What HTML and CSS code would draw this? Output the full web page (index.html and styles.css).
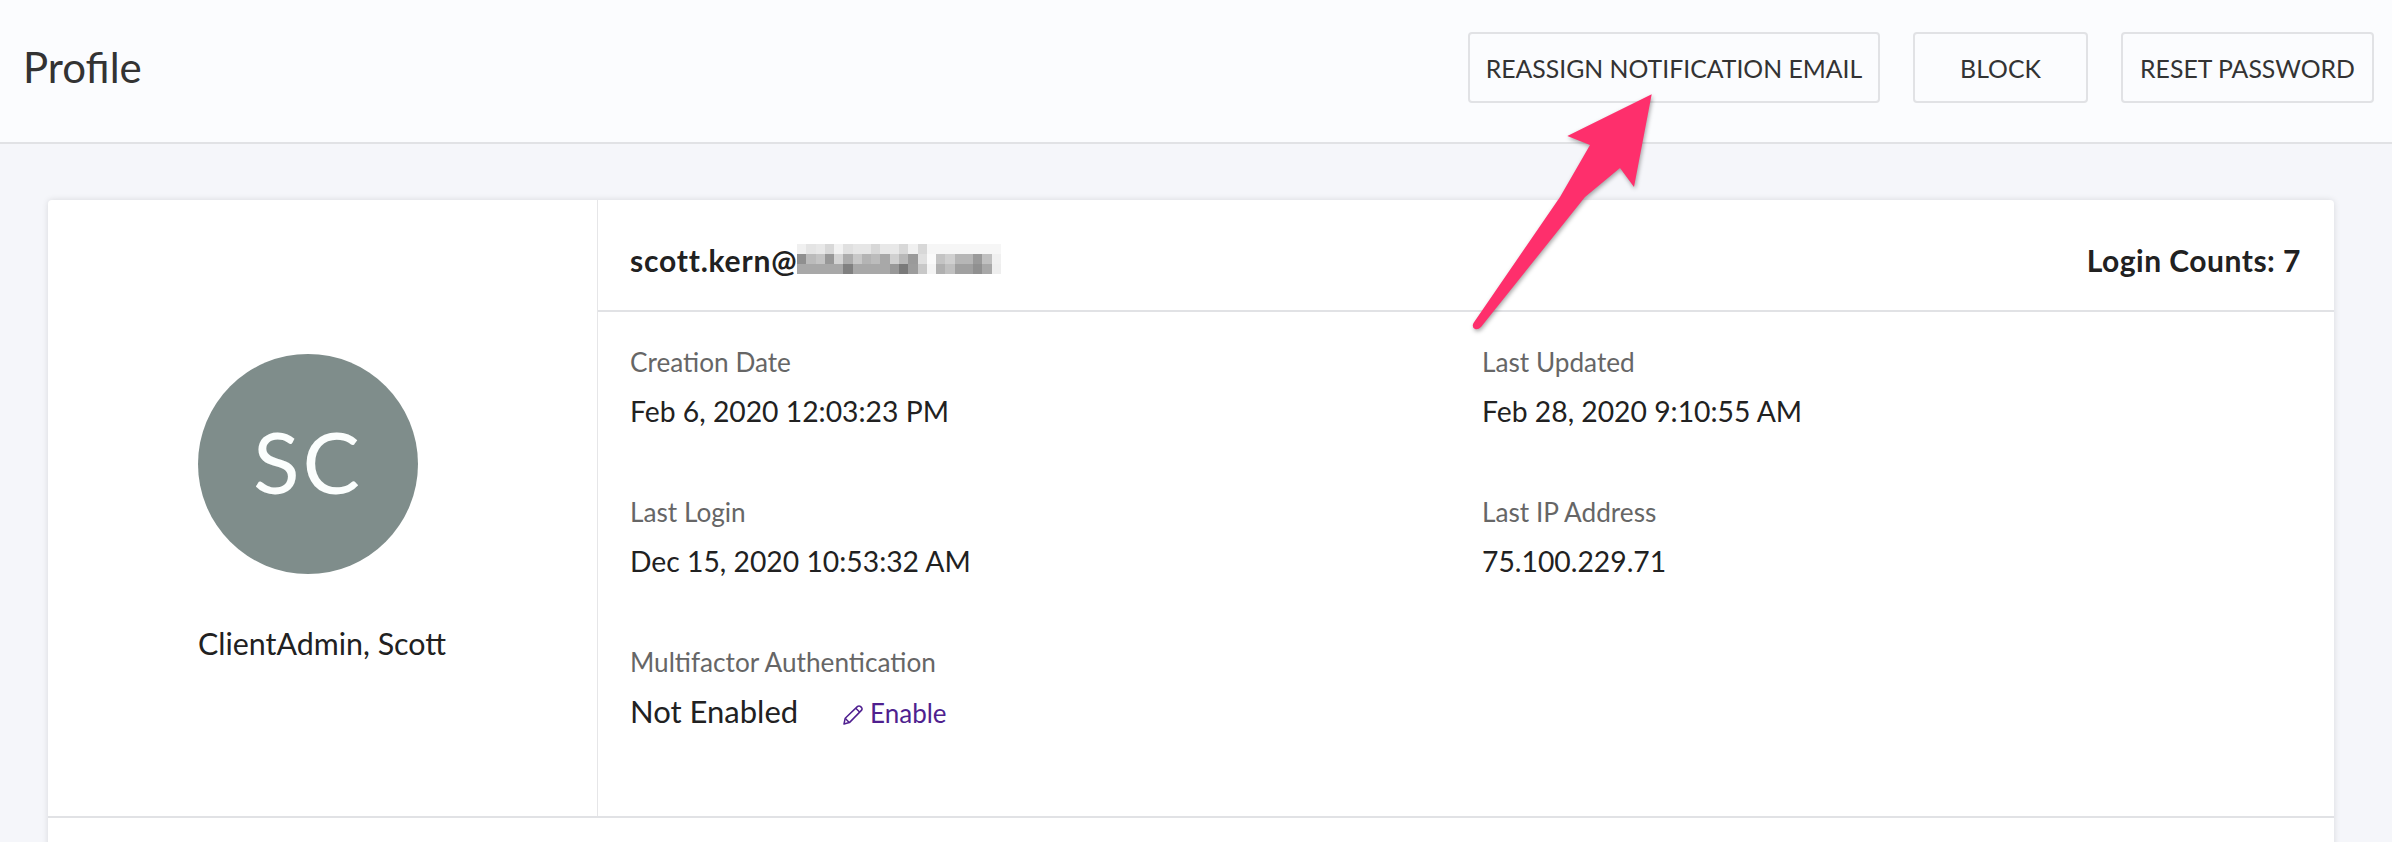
FILE: index.html
```html
<!DOCTYPE html>
<html lang="en">
<head>
    <meta charset="utf-8">
    <title>Profile</title>
    <link rel="stylesheet" href="styles.css">
</head>
<body>
    <header class="topbar">
        <h1 class="page-title">Profile</h1>
        <div class="actions">
            <button class="btn btn-reassign">REASSIGN NOTIFICATION EMAIL</button>
            <button class="btn btn-block">BLOCK</button>
            <button class="btn btn-reset">RESET PASSWORD</button>
        </div>
    </header>

    <main class="content">
        <section class="card">
            <div class="card-main">
                <aside class="identity">
                    <div class="avatar">SC</div>
                    <div class="name">ClientAdmin, Scott</div>
                </aside>

                <div class="details">
                    <div class="details-head">
                        <div class="email">scott.kern@<svg class="redacted" width="204" height="30" viewBox="0 0 22 3" preserveAspectRatio="none" shape-rendering="crispEdges">
                            <g>
                                <rect x="0" y="0" width="1" height="1" fill="#f0f0f0"/><rect x="1" y="0" width="1" height="1" fill="#e4e4e4"/><rect x="2" y="0" width="1" height="1" fill="#e8e8e8"/><rect x="3" y="0" width="1" height="1" fill="#d8d8d8"/><rect x="4" y="0" width="1" height="1" fill="#f2f2f2"/><rect x="5" y="0" width="1" height="1" fill="#e0e0e0"/><rect x="6" y="0" width="2" height="1" fill="#e6e6e6"/><rect x="8" y="0" width="1" height="1" fill="#d8d8d8"/><rect x="9" y="0" width="2" height="1" fill="#e8e8e8"/><rect x="11" y="0" width="1" height="1" fill="#d8d8d8"/><rect x="12" y="0" width="1" height="1" fill="#f0f0f0"/><rect x="13" y="0" width="1" height="1" fill="#d8d8d8"/><rect x="14" y="0" width="8" height="1" fill="#f6f6f6"/>
                            </g>
                            <g>
                                <rect x="0" y="1" width="1" height="1" fill="#8f8f8f"/><rect x="1" y="1" width="1" height="1" fill="#bbbbbb"/><rect x="2" y="1" width="1" height="1" fill="#c4c4c4"/><rect x="3" y="1" width="1" height="1" fill="#989898"/><rect x="4" y="1" width="1" height="1" fill="#d4d4d4"/><rect x="5" y="1" width="1" height="1" fill="#acacac"/><rect x="6" y="1" width="1" height="1" fill="#c8c8c8"/><rect x="7" y="1" width="1" height="1" fill="#b4b4b4"/><rect x="8" y="1" width="1" height="1" fill="#bcbcbc"/><rect x="9" y="1" width="1" height="1" fill="#a8a8a8"/><rect x="10" y="1" width="1" height="1" fill="#d0d0d0"/><rect x="11" y="1" width="1" height="1" fill="#b8b8b8"/><rect x="12" y="1" width="1" height="1" fill="#9a9a9a"/><rect x="13" y="1" width="1" height="1" fill="#e0e0e0"/><rect x="14" y="1" width="1" height="1" fill="#fafafa"/><rect x="15" y="1" width="1" height="1" fill="#c4c4c4"/><rect x="16" y="1" width="1" height="1" fill="#d0d0d0"/><rect x="17" y="1" width="2" height="1" fill="#b6b6b6"/><rect x="19" y="1" width="1" height="1" fill="#9a9a9a"/><rect x="20" y="1" width="1" height="1" fill="#c0c0c0"/><rect x="21" y="1" width="1" height="1" fill="#f0f0f0"/>
                            </g>
                            <g>
                                <rect x="0" y="2" width="5" height="1" fill="#a8a8a8"/><rect x="5" y="2" width="1" height="1" fill="#808080"/><rect x="6" y="2" width="4" height="1" fill="#a8a8a8"/><rect x="10" y="2" width="1" height="1" fill="#989898"/><rect x="11" y="2" width="1" height="1" fill="#7a7a7a"/><rect x="12" y="2" width="1" height="1" fill="#9c9c9c"/><rect x="13" y="2" width="1" height="1" fill="#c8c8c8"/><rect x="14" y="2" width="1" height="1" fill="#f4f4f4"/><rect x="15" y="2" width="1" height="1" fill="#b0b0b0"/><rect x="16" y="2" width="1" height="1" fill="#c0c0c0"/><rect x="17" y="2" width="2" height="1" fill="#a0a0a0"/><rect x="19" y="2" width="1" height="1" fill="#909090"/><rect x="20" y="2" width="1" height="1" fill="#a8a8a8"/><rect x="21" y="2" width="1" height="1" fill="#eeeeee"/>
                            </g>
                        </svg></div>
                        <div class="login-counts">Login Counts: 7</div>
                    </div>

                    <div class="details-grid">
                        <div class="field">
                            <div class="field-label">Creation Date</div>
                            <div class="field-value">Feb 6, 2020 12:03:23 PM</div>
                        </div>
                        <div class="field">
                            <div class="field-label">Last Updated</div>
                            <div class="field-value">Feb 28, 2020 9:10:55 AM</div>
                        </div>
                        <div class="field">
                            <div class="field-label">Last Login</div>
                            <div class="field-value">Dec 15, 2020 10:53:32 AM</div>
                        </div>
                        <div class="field">
                            <div class="field-label">Last IP Address</div>
                            <div class="field-value">75.100.229.71</div>
                        </div>
                        <div class="field">
                            <div class="field-label">Multifactor Authentication</div>
                            <div class="field-value field-words">Not Enabled
                                <a class="enable-link" href="#">
                                    <svg class="pencil" width="20" height="20" viewBox="0 0 20 20" fill="none" stroke="currentColor" stroke-width="1.5" stroke-linejoin="round">
                                        <path d="M1 19 L2.2 13.2 L14.6 1.4 Q16 0.4 17.4 1.4 L18.6 2.6 Q19.6 4 18.4 5.4 L6.4 17.6 Z"/>
                                        <path d="M2.4 13.4 L6.2 17.4 M12.8 3.2 L16.8 7.2"/>
                                    </svg>Enable</a>
                            </div>
                        </div>
                    </div>
                </div>
            </div>
            <div class="card-foot"></div>
        </section>
    </main>

    <svg class="arrow" width="240" height="250" viewBox="0 0 240 250">
        <path d="M231.7 4.3 L147.3 46 L170 55 L140 107 L53.5 233 Q51.5 237 55 239 Q58 240 61 237 L165 107 L200 78 L214 97 Z" fill="#fe2f6c"/>
    </svg>
</body>
</html>
```

FILE: styles.css
```css
* { box-sizing: border-box }

html, body {
    margin: 0;
    height: 100%;
    overflow: hidden;
}

body {
    position: relative;
    background-color: #f5f6fa;
    color: #212121;
    font-family: "Lato", "Open Sans", sans-serif;
}

.topbar {
    height: 144px;
    padding: 32px 18px 0 23px;
    display: flex;
    justify-content: space-between;
    align-items: flex-start;
    background-color: #fbfcfe;
    border-bottom: 2px solid #e1e2e5;
}

.page-title {
    margin: 0;
    font-size: 42px;
    line-height: 71px;
    font-weight: 400;
    color: #333;
}

.actions {
    display: flex;
    gap: 33px;
}

.btn {
    height: 71px;
    background: transparent;
    border: 2px solid #e1e2e5;
    border-radius: 4px;
    font-family: inherit;
    font-size: 24.8px;
    color: #333;
    padding: 2px 0 0;
}

.btn-reassign { width: 412px }
.btn-block { width: 175px }
.btn-reset { width: 253px }

.content { padding: 56px 58px 0 48px }

.card {
    background-color: white;
    border-radius: 4px;
    box-shadow: 0 0 6px rgba(0, 0, 0, 0.12);
}

.card-main {
    display: grid;
    grid-template-columns: 549px 1fr;
    height: 618px;
    border-bottom: 2px solid #e1e2e5;
}

.card-foot { height: 60px }

.identity {
    padding: 154px 0 0 150px;
    display: flex;
    flex-direction: column;
    align-items: flex-start;
}

.avatar {
    width: 220px;
    height: 220px;
    border-radius: 50%;
    background-color: #7f8d8b;
    color: #fbfefd;
    font-size: 86px;
    font-weight: 400;
    letter-spacing: 3px;
    line-height: 214px;
    text-align: center;
}

.name {
    margin-top: 50px;
    font-size: 30.4px;
    line-height: 38px;
}

.details { border-left: 1px solid #e6e6e8 }

.details-head {
    height: 112px;
    padding: 10px 33px 0 32px;
    display: flex;
    justify-content: space-between;
    align-items: center;
    border-bottom: 2px solid #e1e2e5;
    font-size: 30px;
    font-weight: 700;
}

.email {
    display: flex;
    align-items: center;
    letter-spacing: 0.8px;
}

.login-counts { letter-spacing: 0.5px }

.redacted { margin-top: -2px }

.details-grid {
    padding: 31px 32px 0;
    display: grid;
    grid-template-columns: 852px 1fr;
    row-gap: 63px;
}

.field-label {
    font-size: 26.2px;
    line-height: 38px;
    color: #666;
}

.field-value {
    margin-top: 11px;
    font-size: 28.3px;
    line-height: 38px;
}

.field-words { font-size: 31px }

.enable-link {
    margin-left: 37px;
    font-size: 26px;
    color: #4f1f8f;
    text-decoration: none;
}

.pencil {
    margin-right: 7px;
    vertical-align: -2px;
}

.arrow {
    position: absolute;
    left: 1420px;
    top: 90px;
    filter: drop-shadow(1px 2px 2px rgba(0, 0, 0, 0.35));
}
```
